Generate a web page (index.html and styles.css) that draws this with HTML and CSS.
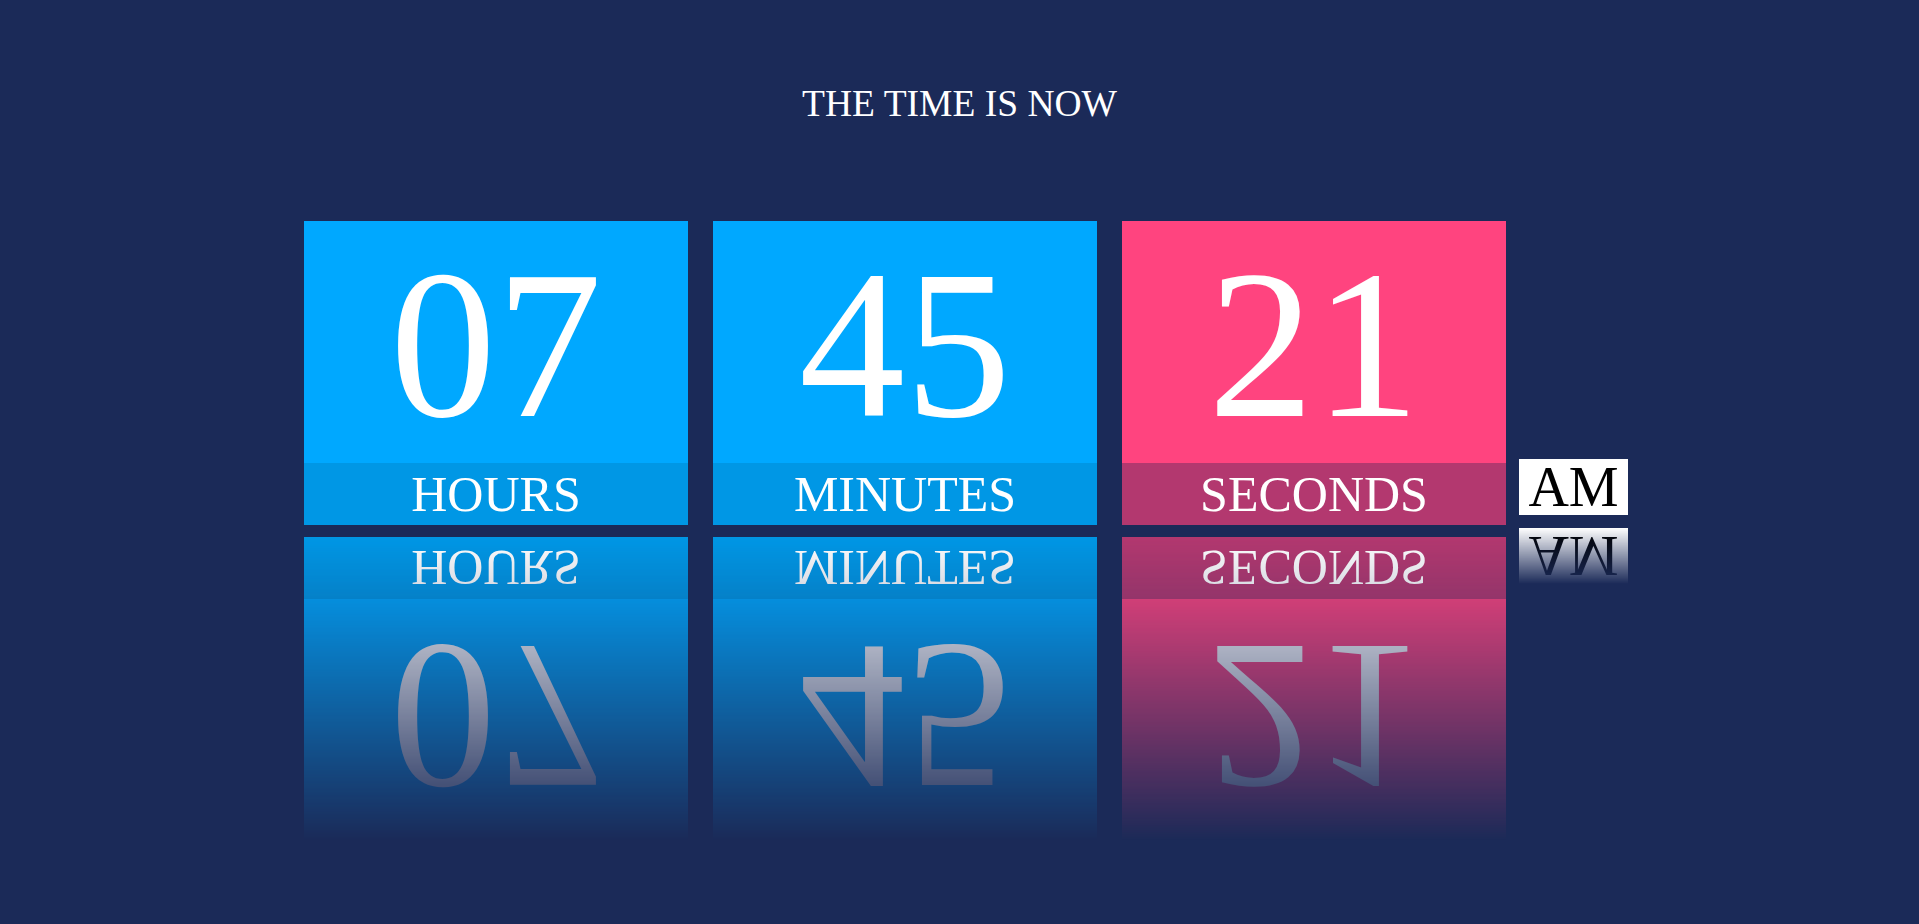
FILE: index.html
```html
<!DOCTYPE html>
<html lang="en">
<head>
<meta charset="utf-8">
<title>The Time Is Now</title>
<link rel="stylesheet" href="styles.css">
</head>
<body>
  <h1 class="title">THE TIME IS NOW</h1>
  <div class="clock">
    <div class="unit unit-blue">
      <div class="value">07</div>
      <div class="label">HOURS</div>
    </div>
    <div class="unit unit-blue">
      <div class="value">45</div>
      <div class="label">MINUTES</div>
    </div>
    <div class="unit unit-pink">
      <div class="value">21</div>
      <div class="label">SECONDS</div>
    </div>
    <div class="meridiem">AM</div>
  </div>
</body>
</html>
```

FILE: styles.css
```css
html, body {
  margin: 0;
  padding: 0;
}

body {
  background: #1b2a58;
  color: #ffffff;
  font-family: "Liberation Serif", "Times New Roman", serif;
  height: 924px;
  overflow: hidden;
}

.title {
  margin: 0;
  padding-top: 82px;
  font-size: 37.5px;
  font-weight: normal;
  line-height: 1.15;
  text-align: center;
}

.clock {
  display: flex;
  align-items: flex-end;
  gap: 25px;
  margin-top: 96px;
  padding-left: 304px;
}

.unit {
  width: 384px;
  height: 304px;
  display: flex;
  flex-direction: column;
  text-align: center;
  -webkit-box-reflect: below 12px linear-gradient(transparent, #ffffff);
}

.unit-blue {
  background: #00a8ff;
}

.unit-pink {
  background: #ff447f;
}

.value {
  height: 242px;
  box-sizing: border-box;
  padding-top: 18px;
  font-size: 212px;
  line-height: 1;
}

.label {
  height: 62px;
  font-size: 50px;
  line-height: 62px;
}

.unit-blue .label {
  background: #0097e5;
}

.unit-pink .label {
  background: #b3386f;
}

.meridiem {
  width: 109px;
  height: 56px;
  margin-left: -12px;
  margin-bottom: 10px;
  background: #ffffff;
  color: #000000;
  font-size: 56px;
  line-height: 56px;
  text-align: center;
  -webkit-box-reflect: below 13px linear-gradient(transparent, #ffffff);
}
```
